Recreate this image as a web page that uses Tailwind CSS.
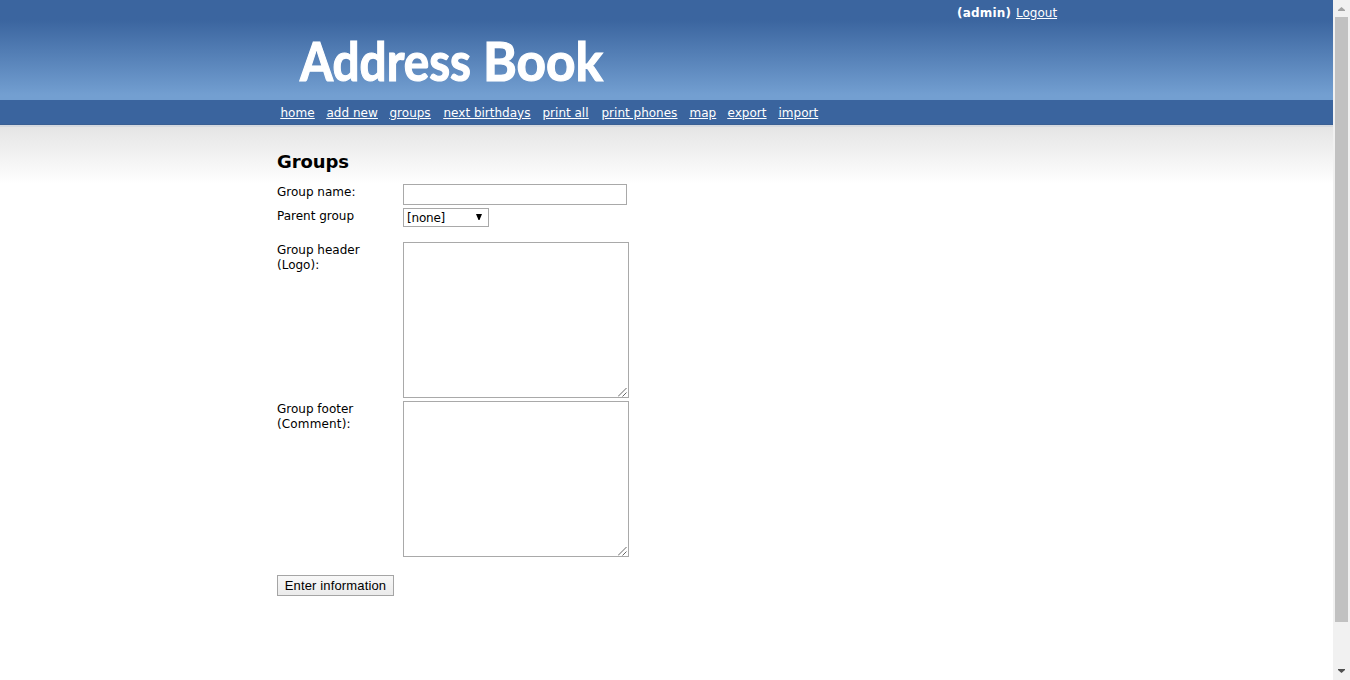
<!DOCTYPE html>
<html lang="en">
<head>
<meta charset="utf-8">
<title>Address Book</title>
<script src="https://cdn.jsdelivr.net/npm/@tailwindcss/browser@4"></script>
</head>
<body class="flex h-[680px] w-[1350px] overflow-hidden bg-white font-['DejaVu_Sans',sans-serif] text-[12px] leading-[15px] text-black">
<div class="h-[680px] w-[1333px] bg-white">
  <header class="h-[100px] bg-linear-to-b from-[#3b659f] from-20% to-[#739fd1] to-95% pl-[277px]">
    <div class="flex h-[25px] w-[780px] items-center justify-end gap-[3px] pt-[2px] text-white">
      <b class="w-[56px] whitespace-nowrap tracking-[0.2px]">(admin)</b><a href="#" class="w-[41px] whitespace-nowrap underline">Logout</a>
    </div>
    <h1 class="h-[75px]">
      <svg class="block" width="400" height="75" fill="#fff" stroke="#fff" stroke-width="1.2" font-family="Lato" font-weight="700" font-size="54"><text x="23" y="56" textLength="171" lengthAdjust="spacingAndGlyphs">Address</text><text x="206" y="56" textLength="120" lengthAdjust="spacingAndGlyphs">Book</text></svg>
    </h1>
  </header>
  <nav class="flex h-[25px] items-center border-b border-[#3a5f93] bg-[#3a649e] pt-[2px] pl-[280.5px] whitespace-nowrap text-white underline">
    <a href="#" class="w-[46px]">home</a>
    <a href="#" class="w-[63px]">add new</a>
    <a href="#" class="w-[54px]">groups</a>
    <a href="#" class="w-[99px]">next birthdays</a>
    <a href="#" class="w-[59px]">print all</a>
    <a href="#" class="w-[88px]">print phones</a>
    <a href="#" class="w-[38px]">map</a>
    <a href="#" class="w-[51px]">export</a>
    <a href="#">import</a>
  </nav>
  <main class="h-[555px] border-t-2 border-[#d5d9df] bg-linear-to-b from-[#e5e5e5] to-white to-[57px] pl-[277px]">
    <h2 class="pt-[23px] text-[18px] leading-[24px] font-bold tracking-[-0.1px]">Groups</h2>
    <form class="pt-[10px]">
      <div class="flex h-[24px]">
        <label class="w-[126px] pt-px">Group name:</label>
        <input type="text" class="h-[21px] w-[224px] border border-[#a9a9a9] bg-white">
      </div>
      <div class="flex h-[34px]">
        <label class="w-[126px] pt-px">Parent group</label>
        <div class="flex h-[19px] w-[86px] items-center justify-between border border-[#a9a9a9] bg-white pr-[6px] pl-[3px]">
          <span class="pt-[2px] tracking-[-0.2px]">[none]</span>
          <svg class="mb-px" width="6" height="6"><path d="M0 0H6L3.5 6H2.5Z"/></svg>
        </div>
      </div>
      <div class="flex h-[159px]">
        <label class="w-[126px] pt-px">Group header<br>(Logo):</label>
        <div class="flex h-[156px] w-[226px] items-end justify-end border border-[#a9a9a9] bg-white px-px">
          <svg width="9" height="9" stroke="#555" stroke-width="0.9" fill="none"><path d="M0 8.5 8.5 0M4.5 8.5 8.5 4.5"/></svg>
        </div>
      </div>
      <div class="flex h-[174px]">
        <label class="w-[126px] pt-px">Group footer<br><span class="tracking-[0.15px]">(Comment):</span></label>
        <div class="flex h-[156px] w-[226px] items-end justify-end border border-[#a9a9a9] bg-white px-px">
          <svg width="9" height="9" stroke="#555" stroke-width="0.9" fill="none"><path d="M0 8.5 8.5 0M4.5 8.5 8.5 4.5"/></svg>
        </div>
      </div>
      <button type="button" class="block h-[21px] w-[117px] border border-[#a5a5a5] bg-linear-to-b from-[#f8f8f8] to-[#ebebeb] font-['Liberation_Sans',sans-serif] text-[13px] leading-[19px] tracking-[0.14px] whitespace-nowrap">Enter information</button>
    </form>
  </main>
</div>
<aside class="flex h-[680px] w-[17px] flex-col items-center bg-[#f1f1f1]">
  <svg class="shrink-0" width="17" height="17" fill="#a3a3a3"><path d="M5 11V10L8.5 7L12 10V11Z"/></svg>
  <div class="h-[605px] w-[13px] bg-[#c1c1c1]"></div>
  <div class="grow"></div>
  <svg class="shrink-0" width="17" height="17" fill="#505050"><path d="M5 6V7L8.5 10L12 7V6Z"/></svg>
</aside>
</body>
</html>
